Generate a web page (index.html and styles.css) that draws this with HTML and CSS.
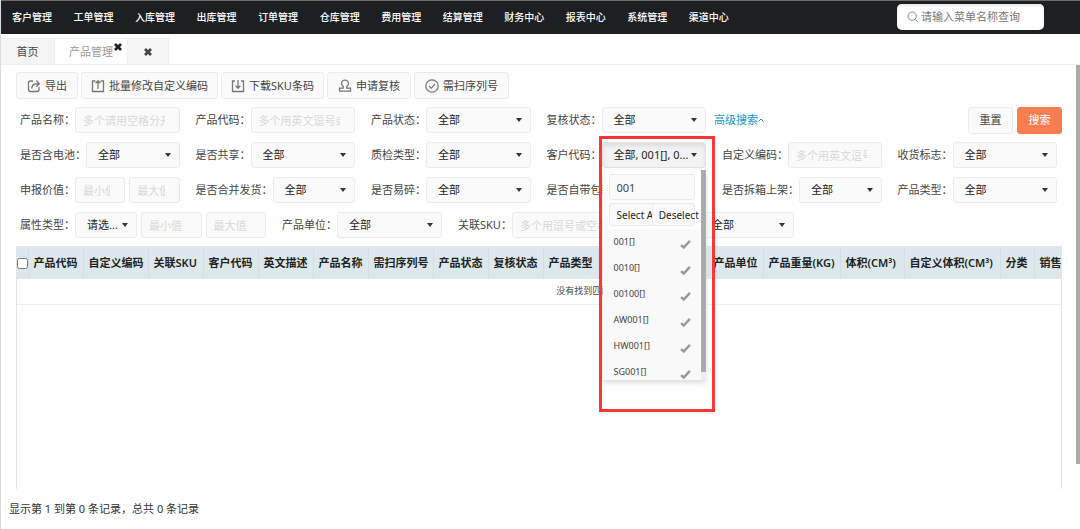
FILE: index.html
```html
<!DOCTYPE html>
<html lang="zh-CN">
<head>
<meta charset="utf-8">
<title>产品管理</title>
<link rel="stylesheet" href="styles.css">
</head>
<body>
<svg class="defs" aria-hidden="true">
  <symbol id="cross" viewBox="0 0 10 10"><path d="M2 2l6 6M8 2l-6 6" stroke="currentColor" stroke-width="2.8" fill="none"/></symbol>
  <symbol id="tick" viewBox="0 0 10 10"><path d="M1 5.6l2.4 2.2L9 1.8" stroke="currentColor" stroke-width="2.3" fill="none"/></symbol>
</svg>
<header class="topbar">
  <nav class="menu">
    <a href="#">客户管理</a><a href="#">工单管理</a><a href="#">入库管理</a><a href="#">出库管理</a><a href="#">订单管理</a><a href="#">仓库管理</a><a href="#">费用管理</a><a href="#">结算管理</a><a href="#">财务中心</a><a href="#">报表中心</a><a href="#">系统管理</a><a href="#">渠道中心</a>
  </nav>
  <div class="menu-search">
    <svg viewBox="0 0 12 12" width="12" height="12" fill="none" stroke="#888"><circle cx="5.2" cy="5.2" r="4.2"/><path d="M8.3 8.3l2.7 2.9"/></svg>
    <input type="text" placeholder="请输入菜单名称查询" aria-label="请输入菜单名称查询">
  </div>
</header>
<div class="tabs">
  <a class="tab home" href="#">首页</a>
  <a class="tab active" href="#">产品管理<svg class="tab-close"><use href="#cross"/></svg></a>
  <button class="tab close-all" aria-label="关闭"><svg><use href="#cross"/></svg></button>
</div>
<main class="page">
  <div class="toolbar">
    <button class="btn"><svg viewBox="0 0 14 14"><path d="M6 2H3.500Q1.500 2 1.500 4v6.500q0 2 2 2h6.500q2 0 2-2V8M4.800 9.500Q5 4.800 9 4.800h3M9.300 1.500l3 3.200-3 3"/></svg>导出</button>
    <button class="btn"><svg viewBox="0 0 14 14"><path d="M4.500 2h-3v10.500h11V2h-3M7 10V2M4.600 4.300L7 1.800l2.400 2.500"/></svg>批量修改自定义编码</button>
    <button class="btn"><svg viewBox="0 0 14 14"><path d="M4 2H1.500v10.500h11V2H10M7 1v8M4.600 6.800L7 9.300l2.400-2.500"/></svg>下载SKU条码</button>
    <button class="btn"><svg viewBox="0 0 14 14"><path d="M5.300 9.200V7.700Q3.500 6.300 3.500 4.600a3.500 3.500 0 0 1 7 0Q10.500 6.300 8.700 7.700v1.500h3.800v3h-11v-3h3.800z"/></svg>申请复核</button>
    <button class="btn"><svg viewBox="0 0 14 14"><circle cx="7" cy="7" r="6.200"/><path d="M4 7l2.300 2.200L10 5.300"/></svg>需扫序列号</button>
  </div>

  <form class="filters">
    <div class="field"><label for="name">产品名称：</label><input id="name" type="text" placeholder="多个请用空格分开"></div>
    <div class="field"><label for="code">产品代码：</label><input id="code" type="text" placeholder="多个用英文逗号或"></div>
    <div class="field"><label for="state">产品状态：</label><span class="pick"><select id="state"><option>全部</option></select></span></div>
    <div class="field"><label for="review">复核状态：</label><span class="pick"><select id="review"><option>全部</option></select></span></div>
    <div class="actions">
      <a class="advanced" href="#">高级搜索<svg viewBox="0 0 6 4" width="6" height="4"><path d="M.5 3.500L3 1l2.500 2.500" fill="none" stroke="currentColor"/></svg></a>
      <button class="btn" type="reset">重置</button>
      <button class="btn primary" type="button">搜索</button>
    </div>

    <div class="field"><label for="battery">是否含电池：</label><span class="pick"><select id="battery"><option>全部</option></select></span></div>
    <div class="field"><label for="share">是否共享：</label><span class="pick"><select id="share"><option>全部</option></select></span></div>
    <div class="field"><label for="qc">质检类型：</label><span class="pick"><select id="qc"><option>全部</option></select></span></div>
    <div class="field"><label for="customer">客户代码：</label>
      <div class="multi pick">
        <button id="customer" class="multi-toggle" type="button">全部, 001[], 0...</button>
        <div class="dropdown">
          <div class="dropdown-body">
            <div class="dropdown-head">
              <input type="text" value="001" aria-label="搜索">
              <div class="pair"><button type="button">Select All</button><button type="button">Deselect All</button></div>
            </div>
            <ul class="options">
              <li>001[]<svg><use href="#tick"/></svg></li>
              <li>0010[]<svg><use href="#tick"/></svg></li>
              <li>00100[]<svg><use href="#tick"/></svg></li>
              <li>AW001[]<svg><use href="#tick"/></svg></li>
              <li>HW001[]<svg><use href="#tick"/></svg></li>
              <li>SG001[]<svg><use href="#tick"/></svg></li>
            </ul>
          </div>
          <div class="dropdown-track"></div>
        </div>
        <div class="highlight"></div>
      </div>
    </div>
    <div class="field"><label for="custom">自定义编码：</label><input id="custom" type="text" placeholder="多个用英文逗号"></div>
    <div class="field"><label for="receive">收货标志：</label><span class="pick"><select id="receive"><option>全部</option></select></span></div>

    <div class="field"><label for="min-value">申报价值：</label><input id="min-value" type="text" placeholder="最小值"><input type="text" placeholder="最大值" aria-label="申报价值最大值"></div>
    <div class="field"><label for="merge">是否合并发货：</label><span class="pick"><select id="merge"><option>全部</option></select></span></div>
    <div class="field"><label for="fragile">是否易碎：</label><span class="pick"><select id="fragile"><option>全部</option></select></span></div>
    <div class="field"><label for="packed">是否自带包装：</label><span class="pick"><select id="packed"><option>全部</option></select></span></div>
    <div class="field"><label for="unbox">是否拆箱上架：</label><span class="pick"><select id="unbox"><option>全部</option></select></span></div>
    <div class="field"><label for="type">产品类型：</label><span class="pick"><select id="type"><option>全部</option></select></span></div>

    <div class="last-row">
      <div class="field range"><label for="attr">属性类型：</label><span class="pick"><select id="attr"><option>请选...</option></select></span><input type="text" placeholder="最小值" aria-label="属性最小值"><input type="text" placeholder="最大值" aria-label="属性最大值"></div>
      <div class="field"><label for="unit">产品单位：</label><span class="pick"><select id="unit"><option>全部</option></select></span></div>
      <div class="field"><label for="sku">关联SKU：</label><input id="sku" type="text" placeholder="多个用逗号或空格"></div>
      <div class="field unlabelled"><span class="pick"><select aria-label="筛选"><option>全部</option></select></span></div>
    </div>
  </form>

  <div class="table-wrap">
    <table>
      <colgroup>
        <col class="c-check"><col class="c4"><col class="c5"><col class="c4"><col class="c4"><col class="c4"><col class="c4"><col class="c5"><col class="c4"><col class="c4"><col class="c4"><col class="c4"><col class="c4"><col class="c4"><col class="c-weight"><col class="c-volume"><col class="c-custom"><col class="c2"><col>
      </colgroup>
      <thead>
        <tr><th><input type="checkbox" aria-label="全选"></th><th>产品代码</th><th>自定义编码</th><th>关联SKU</th><th>客户代码</th><th>英文描述</th><th>产品名称</th><th>需扫序列号</th><th>产品状态</th><th>复核状态</th><th>产品类型</th><th></th><th></th><th>产品单位</th><th>产品重量(KG)</th><th>体积(CM³)</th><th>自定义体积(CM³)</th><th>分类</th><th>销售</th></tr>
      </thead>
      <tbody><tr><td colspan="19">没有找到匹配的记录</td></tr></tbody>
    </table>
  </div>
  <p class="summary">显示第 1 到第 0 条记录，总共 0 条记录</p>
  <div class="page-thumb"></div>
</main>
</body>
</html>
```

FILE: styles.css
```css
* { box-sizing: border-box; }
body {
  margin: 0;
  min-height: 100vh;
  display: flex;
  flex-direction: column;
  overflow: hidden;
  border-left: 1px solid #dcdbe3;
  background: #fff;
  color: #444;
  font: 11px/16px "Noto Sans", "Noto Sans CJK SC", sans-serif;
}
input, select, button { font: inherit; color: inherit; margin: 0; }
a { color: inherit; text-decoration: none; }
.defs { position: absolute; width: 0; height: 0; }

/* Top navigation */
.topbar {
  height: 34px;
  display: flex;
  align-items: center;
  justify-content: space-between;
  padding: 0 36px 2px 11px;
  background: #1d2023;
  border-top: 1px solid #6a6c6e;
}
.menu {
  display: flex;
  flex: 0 1 717px;
  justify-content: space-between;
  color: #fff;
  font-size: 10px;
  font-weight: 500;
  white-space: nowrap;
}
.menu-search {
  display: flex;
  align-items: center;
  gap: 2px;
  width: 147px;
  height: 26px;
  padding: 0 8px 0 10px;
  border-radius: 5px;
  background: #fff;
  box-shadow: inset 0 2px 3px #e8e8e8;
}
.menu-search svg { flex: none; }
.menu-search input { flex: 1; min-width: 0; padding: 0; border: 0; outline: 0; background: none; }
.menu-search input::placeholder { color: #777; }

/* Tabs */
.tabs {
  display: flex;
  height: 31px;
  padding-top: 4px;
  border-bottom: 1px solid #eceef3;
}
.tab {
  display: flex;
  align-items: center;
  justify-content: center;
  width: 54px;
  padding: 0;
  border: 1px solid #eceef3;
  border-width: 1px 1px 0 0;
  background: #f5f5f5;
}
.tab.active {
  position: relative;
  width: 73px;
  background: #fff;
  color: #999;
}
.tab-close { position: absolute; top: 3px; right: 4px; width: 10px; height: 10px; color: #222; }
.tab.close-all { width: 41px; color: #444; }
.close-all svg { width: 10px; height: 10px; }

/* Page body */
.page {
  position: relative;
  flex: 1;
  display: flex;
  flex-direction: column;
  padding: 7px 18px 0 15px;
}
.page-thumb { position: absolute; top: 0; right: 0; width: 4px; height: 86%; background: #ababab; }
.toolbar { display: flex; gap: 3px; }
.btn {
  display: flex;
  align-items: center;
  justify-content: center;
  gap: 4px;
  min-width: 62px;
  height: 27px;
  padding: 0 9px;
  border: 1px solid #eaebf2;
  border-radius: 3px;
  background: #fafafa;
  white-space: nowrap;
}
.toolbar .btn:nth-child(n+4) { padding: 0 10px; }
.btn svg { width: 14px; height: 14px; fill: none; stroke: #777; stroke-width: 1.300; }

.filters {
  display: grid;
  grid-template-columns: repeat(6, minmax(0, 1fr));
  gap: 9px 16px;
  padding: 8px 5px 8px 4px;
}
.field { display: flex; align-items: center; gap: 4px; min-width: 0; }
.field > label { flex: none; margin-right: -4px; white-space: nowrap; }
.field input, .pick { flex: 1; min-width: 0; }
.field input, .pick select, .multi-toggle {
  display: block;
  width: 100%;
  height: 26px;
  border: 1px solid #eaebf2;
  border-radius: 3px;
  background: #fafafa;
  outline: 0;
}
.field input { padding: 0 14px 0 7px; }
.field input::placeholder { color: #d8d8d8; }
.pick { position: relative; }
.pick select, .multi-toggle { padding: 0 18px 0 11px; appearance: none; color: #222; text-align: left; white-space: nowrap; }
.pick::after {
  content: "";
  position: absolute;
  top: 11px;
  right: 9px;
  border: 3px solid transparent;
  border-top: 4px solid #333;
  border-bottom: 0;
}
.actions {
  grid-column: 5 / 7;
  display: flex;
  align-items: center;
  gap: 4px;
  height: 26px;
  margin: 0 -5px 0 -8px;
}
.advanced { display: flex; align-items: center; margin-right: auto; color: #1296cb; }
.actions .btn { min-width: 45px; }
.actions .primary { border-color: #fa7d50; background: #fa7d50; color: #fff; }
.last-row { grid-column: 1 / -1; display: flex; gap: 16px; }
.last-row .field { width: 160px; }
.last-row .range { width: 246px; }
.last-row .unlabelled { padding-left: 66px; }
.range .pick { flex: none; width: 62px; }
.range .pick select { padding-right: 0; }

/* Multi-select and its open menu */
.field .multi-toggle { padding-right: 0; border-color: #e0e0e4; background: #f3f3f3; box-shadow: inset 0 3px 4px #ddd; }
.dropdown {
  position: absolute;
  z-index: 2;
  top: 28px;
  left: 1px;
  right: 0;
  display: flex;
  background: #f9f9f9;
  box-shadow: 0 3px 5px #ddd;
}
.dropdown-body { flex: 1; min-width: 0; height: 210px; overflow: hidden; }
.dropdown-head { padding: 4px 6px 3px 6px; background: #fff; }
.pair { display: flex; height: 23px; margin-top: 3px; border: 1px solid #eaebf2; border-radius: 3px; background: #fafafa; font-size: 10px; color: #222; }
.pair button { width: 50%; flex: none; padding: 0 0 0 7px; border: 0; background: none; text-align: left; white-space: nowrap; overflow: hidden; }
.pair button + button { padding-left: 6px; border-left: 1px solid #eaebf2; overflow: visible; }
.options { list-style: none; margin: 0; padding: 0; font-size: 9px; }
.options li { display: flex; align-items: center; justify-content: space-between; height: 26px; padding: 0 10px 0 11px; }
.options svg { width: 11px; height: 11px; margin-top: 5px; color: #999; }
.dropdown-track { width: 5px; background: linear-gradient(#ababab 96%, #eee 96%); }
.highlight {
  position: absolute;
  z-index: 3;
  top: -6px;
  left: -3px;
  right: -9px;
  height: 276px;
  border: 3px solid #fc3535;
  pointer-events: none;
}

/* Results */
.table-wrap {
  flex: 1;
  overflow: hidden;
  border: 1px solid #e3e5e8;
  border-top-width: 2px;
  border-bottom: 0;
}
table { width: 1160px; table-layout: fixed; border-collapse: collapse; }
.c-check { width: 11px; }
.c2 { width: 34px; }
.c4 { width: 55px; }
.c5 { width: 65px; }
.c-weight { width: 77px; }
.c-volume { width: 64px; }
.c-custom { width: 96px; }
th {
  height: 31px;
  padding: 0 0 1px 5px;
  border-right: 1px solid #d3dfe4;
  background: #dce8eb;
  color: #222;
  font-weight: 600;
  text-align: left;
  white-space: nowrap;
}
th:first-child { padding: 0; }
th input { display: block; width: 11px; height: 11px; }
td { height: 25px; padding: 0; border-bottom: 1px solid #f0f0f0; font-size: 9px; text-align: center; }
.summary { margin: 0 0 0 -7px; padding: 12px 0; color: #333; }
```
